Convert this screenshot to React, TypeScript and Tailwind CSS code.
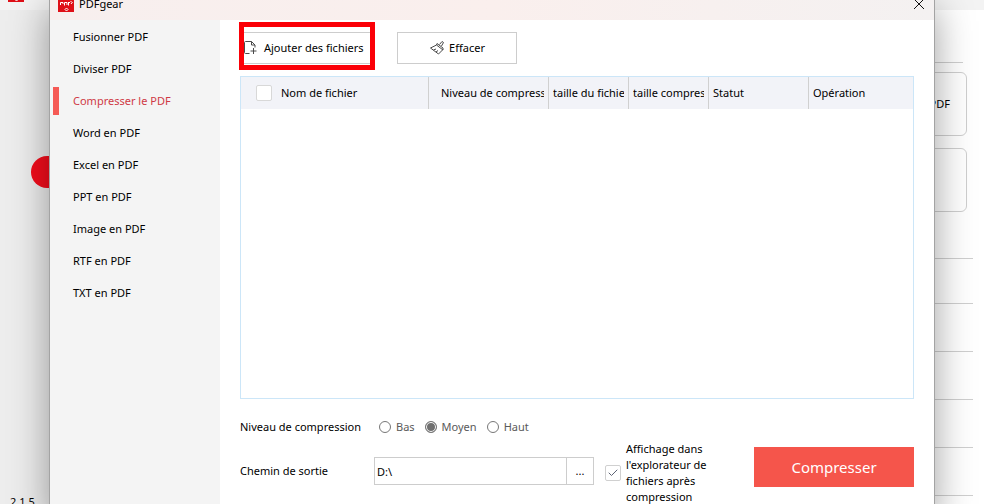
import React, { useState } from 'react';
import { Check } from 'lucide-react';

const TOOLS = [
  'Fusionner PDF',
  'Diviser PDF',
  'Compresser le PDF',
  'Word en PDF',
  'Excel en PDF',
  'PPT en PDF',
  'Image en PDF',
  'RTF en PDF',
  'TXT en PDF',
];

const LEVELS = ['Bas', 'Moyen', 'Haut'];

const Logo: React.FC = () => (
  <svg viewBox="0 0 16 16" className="w-4 h-4 shrink-0" aria-hidden="true">
    <rect width="16" height="16" fill="#df0f17" />
    <path d="M2.500 9V6.500H5V8M6.500 9.500V6.500H9V9M10.500 9.500V6M10.500 6.500H12" fill="none" stroke="#fff" />
    <path d="M13 8l1.500-2M12.500 5l1 1" fill="none" stroke="#fff" />
    <path d="M8.500 12l1.500 1.500L8.500 15 7 13.500z" fill="none" stroke="#fff" />
  </svg>
);

const AddFileIcon: React.FC = () => (
  <svg viewBox="0 0 14 14" className="w-3.5 h-3.5 shrink-0" fill="none" stroke="#4a4a4a" aria-hidden="true">
    <path d="M6.500 12.500h-4a1 1 0 0 1-1-1v-10a1 1 0 0 1 1-1h6l3.500 3.500v2.500" />
    <path d="M8.500.500v3.500h3.500M10.500 7v6M7.500 10h6" />
  </svg>
);

const BroomIcon: React.FC = () => (
  <svg viewBox="0 0 16 16" className="w-4 h-4 shrink-0" fill="none" stroke="#4a4a4a" aria-hidden="true">
    <path d="M10.500 4.500L13 1.500l1.500 1L12.500 6M8 3.500l6 4.500v2L7.500 5z" strokeLinejoin="round" />
    <path d="M7.500 5L1.500 8l8 6 4-4M4.500 10l2.500-1M7 12l2-1.500" strokeLinejoin="round" />
  </svg>
);

interface SidebarProps {
  active: string;
  onSelect: (tool: string) => void;
}

const Sidebar: React.FC<SidebarProps> = ({ active, onSelect }) => (
  <nav className="w-[170px] shrink-0 bg-[#f4f4f4] pt-px flex flex-col" aria-label="Outils">
    {TOOLS.map((tool) => (
      <button
        key={tool}
        type="button"
        onClick={() => onSelect(tool)}
        className={
          tool === active
            ? 'h-8 pl-[3px] flex items-center gap-3.5 text-left text-[#cf3a45]'
            : 'h-8 pl-[3px] flex items-center gap-3.5 text-left text-black'
        }
      >
        <span className={tool === active ? 'w-1.5 h-7 bg-[#f55a55]' : 'w-1.5 h-7'} />
        {tool}
      </button>
    ))}
  </nav>
);

const FileTable: React.FC = () => (
  <div className="flex-1 border border-[#cce6f8]">
    <table className="w-full table-fixed border-separate border-spacing-0">
      <thead>
        <tr className="h-8 bg-[#f2f3f8] text-left">
          <th className="w-[188px] pl-[15px] font-normal border-r border-[#d0d0d0]">
            <div className="flex items-center gap-[9px]">
              <input
                type="checkbox"
                id="select-all"
                className="appearance-none w-4 h-4 bg-white border border-[#d8d8d8] rounded-xs"
              />
              <label htmlFor="select-all">Nom de fichier</label>
            </div>
          </th>
          <th className="w-[120px] pl-3 pr-1 font-normal border-r border-[#d0d0d0]">
            <div className="overflow-hidden whitespace-nowrap">Niveau de compression</div>
          </th>
          <th className="w-20 pl-1 pr-1 font-normal border-r border-[#d0d0d0]">
            <div className="overflow-hidden whitespace-nowrap">taille du fichier</div>
          </th>
          <th className="w-20 pl-1 pr-1 font-normal border-r border-[#d0d0d0]">
            <div className="overflow-hidden whitespace-nowrap">taille compressée</div>
          </th>
          <th className="w-[100px] pl-1 font-normal border-r border-[#d0d0d0]">Statut</th>
          <th className="pl-1 font-normal">Opération</th>
        </tr>
      </thead>
      <tbody />
    </table>
  </div>
);

const MainWindow: React.FC = () => (
  <div className="h-full flex flex-col bg-white">
    <header className="h-2.5 shrink-0 bg-[#f3f3f3] flex items-end px-2 pb-2">
      <Logo />
    </header>
    <div className="flex-1 min-h-0 flex">
      <aside className="w-[200px] shrink-0 bg-[#ededed] flex flex-col justify-between px-2.5 pt-[146px]">
        <button
          type="button"
          aria-label="Ouvrir"
          className="h-8 ml-[21px] rounded-full bg-[#f50d1c]"
        />
        <span className="-mb-1.5">2.1.5</span>
      </aside>
      <main className="flex-1 flex flex-col pr-[11px]">
        <div className="h-[53px] mr-2.5 shrink-0 border-b border-[#cfcfcf]" />
        <div className="mt-[9px] mr-1.5 flex flex-col items-end gap-3">
          <div className="w-[200px] h-16 border border-[#cfcfcf] rounded-md flex items-center justify-end pr-4">
            Fusionner PDF
          </div>
          <div className="w-[200px] h-16 border border-[#cfcfcf] rounded-md" />
        </div>
        <div className="h-[47px] shrink-0 border-b border-[#cfcfcf]" />
        <div className="h-[45px] shrink-0 border-b border-[#cfcfcf]" />
        <div className="h-12 shrink-0 border-b border-[#cfcfcf]" />
        <div className="h-12 shrink-0 border-b border-[#cfcfcf]" />
        <div className="h-12 shrink-0 border-b border-[#cfcfcf]" />
        <div className="h-12 shrink-0 border-b border-[#cfcfcf]" />
      </main>
    </div>
  </div>
);

export default function App() {
  const [tool, setTool] = useState('Compresser le PDF');
  const [level, setLevel] = useState('Moyen');
  const [path, setPath] = useState('D:\\');
  const [showInExplorer, setShowInExplorer] = useState(true);

  return (
    <div className="relative h-screen overflow-hidden font-['Noto_Sans','Open_Sans',sans-serif] text-[11px] leading-4 text-black">
      <MainWindow />

      {/* converter window, its title bar runs off the top of the screen */}
      <div
        role="dialog"
        aria-label="PDFgear"
        className="absolute -top-3 bottom-0 inset-x-[49px] flex flex-col bg-white border-x border-[#a3a3a3] shadow-[0_20px_36px_rgba(0,0,0,0.38)]"
      >
        <div className="h-8 shrink-0 flex items-center justify-between pl-2 pr-2.5 bg-linear-to-r from-[#f7efee] via-[#faefed] to-[#f4f1f1]">
          <div className="flex items-center gap-[5px]">
            <Logo />
            <span>PDFgear</span>
          </div>
          <button type="button" aria-label="Fermer">
            <svg viewBox="0 0 10 10" className="w-2.5 h-2.5" stroke="#111" aria-hidden="true">
              <path d="M0 0l10 10M10 0L0 10" />
            </svg>
          </button>
        </div>

        <div className="flex-1 min-h-0 flex">
          <Sidebar active={tool} onSelect={setTool} />

          <div className="flex-1 min-w-0 flex flex-col px-5 pt-3">
            <div className="flex gap-[25px] mb-3">
              <div className="relative">
                <button
                  type="button"
                  className="w-[132px] h-8 pl-0.5 flex items-center gap-[7px] bg-white border border-[#cdcdcd] whitespace-nowrap"
                >
                  <AddFileIcon />
                  Ajouter des fichiers
                </button>
                {/* highlight frame */}
                <div className="absolute -top-2.5 -bottom-1.5 -left-px -right-[3px] border-5 border-[#fb0007] pointer-events-none" />
              </div>
              <button
                type="button"
                className="w-[120px] h-8 flex items-center justify-center gap-1 bg-white border border-[#cdcdcd]"
              >
                <BroomIcon />
                Effacer
              </button>
            </div>

            <FileTable />

            <fieldset className="mt-5 h-4 shrink-0 flex items-center">
              <legend className="float-left w-[139px]">Niveau de compression</legend>
              <div className="flex items-center gap-2.5 text-[#5a5a5a]">
                {LEVELS.map((name) => (
                  <label key={name} className="flex items-center gap-[5px]">
                    <input
                      type="radio"
                      name="level"
                      checked={level === name}
                      onChange={() => setLevel(name)}
                      className="appearance-none w-3 h-3 rounded-full border border-[#777] bg-white checked:bg-[#707070] checked:shadow-[inset_0_0_0_1px_#fff]"
                    />
                    {name}
                  </label>
                ))}
              </div>
            </fieldset>

            <div className="mt-1.5 h-[63px] shrink-0 flex items-start">
              <label htmlFor="output" className="w-[134px] mt-[22px] shrink-0">
                Chemin de sortie
              </label>
              <div className="mt-4 flex flex-1 min-w-0 max-w-[220px]">
                <input
                  id="output"
                  type="text"
                  value={path}
                  onChange={(e) => setPath(e.target.value)}
                  className="flex-1 min-w-0 h-7 px-0.5 bg-white border border-[#cdcdcd] outline-none"
                />
                <button type="button" className="w-7 h-7 -ml-px bg-white border border-[#cdcdcd]">
                  ...
                </button>
              </div>
              <label className="ml-[11px] w-[120px] flex items-center gap-[5px]">
                <span className="relative flex shrink-0">
                  <input
                    type="checkbox"
                    checked={showInExplorer}
                    onChange={(e) => setShowInExplorer(e.target.checked)}
                    className="appearance-none w-4 h-4 bg-white border border-[#d0d0d0] rounded-xs"
                  />
                  {showInExplorer && (
                    <Check className="absolute inset-0.5 w-3 h-3 text-[#5d6475] pointer-events-none" />
                  )}
                </span>
                Affichage dans l'explorateur de fichiers après compression
              </label>
              <button
                type="button"
                className="ml-auto mt-1.5 w-40 h-10 shrink-0 bg-[#f5554b] text-white text-[15px]"
              >
                Compresser
              </button>
            </div>
          </div>
        </div>
      </div>
    </div>
  );
}
